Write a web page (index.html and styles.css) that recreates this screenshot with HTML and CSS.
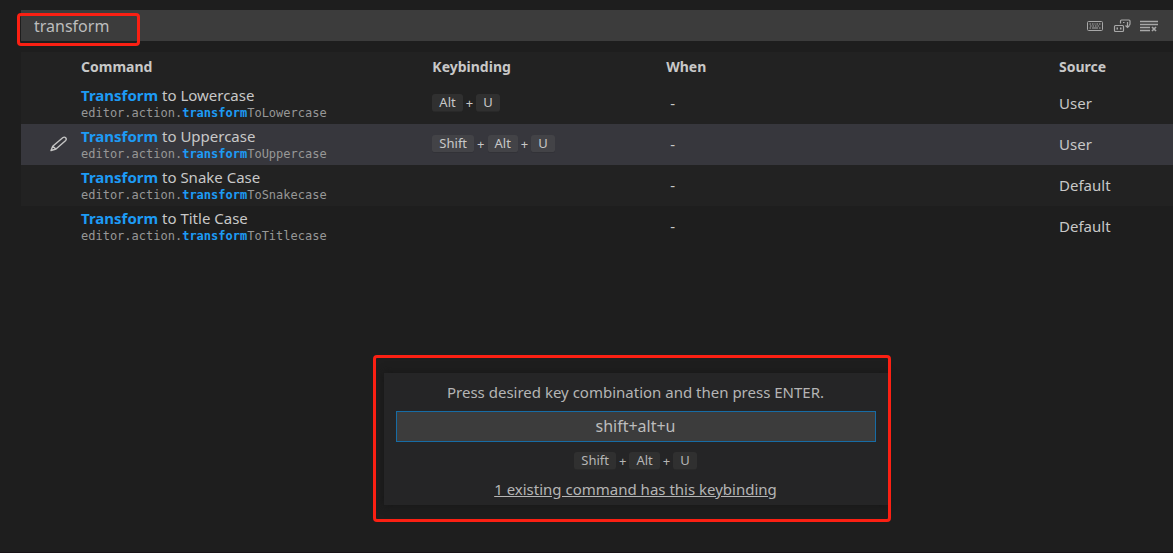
FILE: index.html
```html
<!DOCTYPE html>
<html lang="en">
<head>
<meta charset="utf-8">
<title>Keyboard Shortcuts</title>
<link rel="stylesheet" href="styles.css">
</head>
<body>
<main class="editor">
  <div class="search">
    <input class="search-input" type="text" value="transform" aria-label="Search keybindings">
    <div class="search-actions">
      <button class="icon-button" type="button" aria-label="Record keys">
        <svg width="18" height="18" viewBox="0 0 18 18" fill="none" stroke="currentColor"><rect x="1.500" y="4.500" width="15" height="9" rx="1"/><path d="M3.500 7h1.500m1 0h1.500m1 0h1m1 0h1.500m1 0h1.500M4 9h1.500m1 0h1.500m1 0h1.500m1 0h1.500M3.500 11h1.500m1 0h6m1 0h1.500" stroke-width="1.200"/></svg>
      </button>
      <button class="icon-button" type="button" aria-label="Sort by precedence">
        <svg width="18" height="18" viewBox="0 0 18 18" fill="none" stroke="currentColor" stroke-width="1.200"><rect x="1.500" y="8.500" width="9" height="6" rx="1"/><path d="M7.500 6.500V4q0-1 1-1h7.500q1 0 1 1v3q0 1-1 1M10 5.500h1.500M14.500 5v5.500M12.500 8.500l2 2 2-2"/><path d="M3.500 11.500H5m2 0h1.500" stroke-width="2"/></svg>
      </button>
      <button class="icon-button" type="button" aria-label="Clear search">
        <svg width="18" height="18" viewBox="0 0 18 18" fill="none" stroke="currentColor" stroke-width="1.300"><path d="M0 4.500h18M0 7.500h18M0 10.500h10M0 13.500h10"/><path d="M12 10l4 4m0-4l-4 4" stroke-width="1.700"/></svg>
      </button>
    </div>
    <span class="marker marker-search"></span>
  </div>

  <table class="bindings">
    <colgroup><col class="col-edit"><col class="col-command"><col class="col-key"><col class="col-when"><col class="col-source"></colgroup>
    <thead>
      <tr><th></th><th>Command</th><th>Keybinding</th><th>When</th><th>Source</th></tr>
    </thead>
    <tbody>
      <tr>
        <td></td>
        <td><div class="name"><b>Transform</b> to Lowercase</div><div class="id">editor.action.<b>transform</b>ToLowercase</div></td>
        <td><div class="keys"><kbd>Alt</kbd><span>+</span><kbd>U</kbd></div></td>
        <td class="when">-</td><td>User</td>
      </tr>
      <tr class="selected">
        <td class="edit"><button class="icon-button" type="button" aria-label="Edit keybinding"><svg width="18" height="18" viewBox="0 0 18 18" fill="none" stroke="currentColor" stroke-width="1.400" stroke-linejoin="round"><path d="M1 15.500l1.700-4.200L12.700 2.700q1.700-1.200 3 0 1.300 1.300 0 2.800L6 14zM2.700 11.300L6 14"/></svg></button></td>
        <td><div class="name"><b>Transform</b> to Uppercase</div><div class="id">editor.action.<b>transform</b>ToUppercase</div></td>
        <td><div class="keys"><kbd>Shift</kbd><span>+</span><kbd>Alt</kbd><span>+</span><kbd>U</kbd></div></td>
        <td class="when">-</td><td>User</td>
      </tr>
      <tr>
        <td></td>
        <td><div class="name"><b>Transform</b> to Snake Case</div><div class="id">editor.action.<b>transform</b>ToSnakecase</div></td>
        <td></td><td class="when">-</td><td>Default</td>
      </tr>
      <tr class="plain">
        <td></td>
        <td><div class="name"><b>Transform</b> to Title Case</div><div class="id">editor.action.<b>transform</b>ToTitlecase</div></td>
        <td></td><td class="when">-</td><td>Default</td>
      </tr>
    </tbody>
  </table>
</main>

<section class="recorder">
  <label class="recorder-label" for="combo">Press desired key combination and then press ENTER.</label>
  <input class="recorder-input" id="combo" type="text" value="shift+alt+u">
  <div class="keys"><kbd>Shift</kbd><span>+</span><kbd>Alt</kbd><span>+</span><kbd>U</kbd></div>
  <a class="recorder-link" href="#">1 existing command has this keybinding</a>
  <span class="marker marker-recorder"></span>
</section>
</body>
</html>
```
FILE: styles.css
```css
* { box-sizing: border-box; }

body {
  margin: 0;
  min-height: 100vh;
  position: relative;
  background: #1e1e1e;
  border-bottom: 1px solid #171216;
  color: #c8c8c8;
  font: 15px/20px "Noto Sans", sans-serif;
}

.editor { padding: 10px 0 0 21px; }

.search {
  position: relative;
  display: flex;
  align-items: center;
  height: 31px;
  padding-right: 15px;
  background: #3c3c3c;
}

.search-input {
  flex: 1;
  min-width: 0;
  padding: 0 13px;
  border: 0;
  outline: 0;
  background: none;
  color: #bdbdbd;
  font: 16px/20px "Noto Sans", sans-serif;
}

.search-actions { display: flex; gap: 9px; }

.icon-button {
  display: flex;
  padding: 0;
  border: 0;
  background: none;
  color: #a8a8a8;
}

.edit .icon-button { color: #c5c5c5; }

.marker {
  position: absolute;
  border: 3px solid #fb2013;
  border-radius: 4px;
  pointer-events: none;
}

.marker-search { left: -4px; top: 3px; width: 123px; height: 33px; }

.bindings {
  width: 100%;
  margin-top: 11px;
  border-collapse: collapse;
  table-layout: fixed;
}

.col-edit { width: 60px; }
.col-command { width: 30.5%; }
.col-key { width: 20.3%; }
.col-when { width: 34.1%; }

th {
  height: 31px;
  padding: 0 0 2px;
  text-align: left;
  font-size: 14px;
  font-weight: 700;
}

td { height: 41px; padding: 0 0 2px; }

thead tr, tbody tr { background: #222222; }
tbody tr.plain { background: #1e1e1e; }
tbody tr.selected { background: #37373d; }

.edit { padding-left: 29px; }
.when { padding-left: 4px; }

.name { line-height: 20px; }
.id { color: #979797; font: 12px/16px "DejaVu Sans Mono", monospace; }
b { color: #1d9bf5; font-weight: 700; }

.keys { display: flex; align-items: center; gap: 3px; font-size: 13px; }

kbd {
  padding: 0 7px;
  border-radius: 3px;
  border-bottom: 1px solid #292929;
  background: #303030;
  font: 13px/17px "Noto Sans", sans-serif;
}

.selected kbd { background: #434347; border-color: #323237; }

.recorder {
  position: absolute;
  left: calc(50% + 49px);
  top: 373px;
  width: 504px;
  margin-left: -252px;
  padding: 9px 12px 6px;
  display: flex;
  flex-direction: column;
  align-items: center;
  background: #252526;
  box-shadow: 0 0 8px #161616;
  color: #b5b5b5;
}

.recorder-label { margin-bottom: 9px; }

.recorder-input {
  width: 100%;
  height: 31px;
  padding: 0 0 2px;
  margin-bottom: 9px;
  border: 1px solid #176ca5;
  outline: 0;
  background: #3c3c3c;
  color: #bdbdbd;
  text-align: center;
  font: 16px/20px "Noto Sans", sans-serif;
}

.recorder-link { margin-top: 8px; color: inherit; }

.marker-recorder { left: -11px; top: -18px; width: 518px; height: 167px; }
```
